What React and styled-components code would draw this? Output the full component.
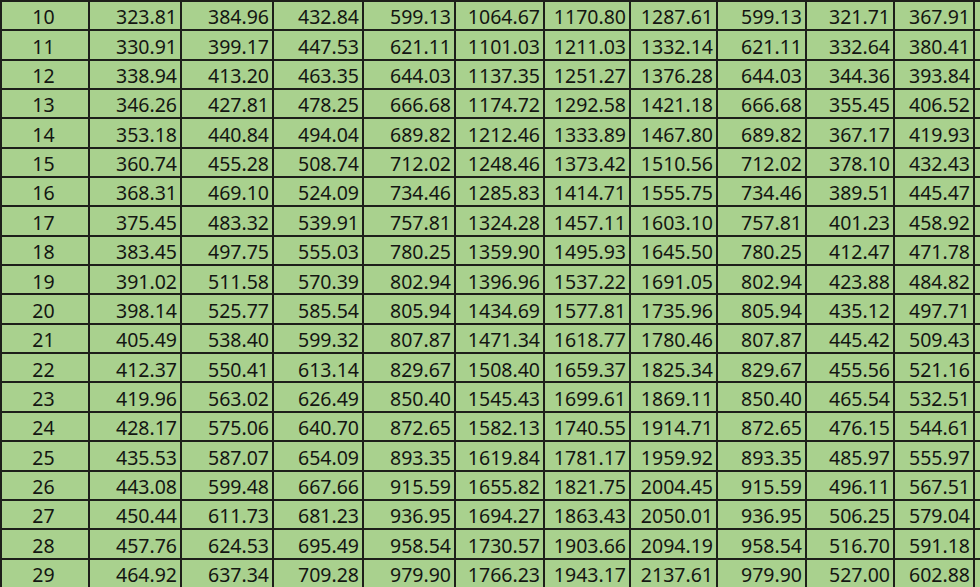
import React from "react";
import styled, { createGlobalStyle } from "styled-components";

const GlobalStyle = createGlobalStyle`
    html, body {
        margin: 0;
        padding: 0;
        background: #ffffff;
        overflow: hidden;
    }
`;

const COLUMN_WIDTHS = [88, 92, 92, 90, 92, 89, 86, 87, 89, 88, 80, 7];

const ROWS = [
    [10, "323.81", "384.96", "432.84", "599.13", "1064.67", "1170.80", "1287.61", "599.13", "321.71", "367.91"],
    [11, "330.91", "399.17", "447.53", "621.11", "1101.03", "1211.03", "1332.14", "621.11", "332.64", "380.41"],
    [12, "338.94", "413.20", "463.35", "644.03", "1137.35", "1251.27", "1376.28", "644.03", "344.36", "393.84"],
    [13, "346.26", "427.81", "478.25", "666.68", "1174.72", "1292.58", "1421.18", "666.68", "355.45", "406.52"],
    [14, "353.18", "440.84", "494.04", "689.82", "1212.46", "1333.89", "1467.80", "689.82", "367.17", "419.93"],
    [15, "360.74", "455.28", "508.74", "712.02", "1248.46", "1373.42", "1510.56", "712.02", "378.10", "432.43"],
    [16, "368.31", "469.10", "524.09", "734.46", "1285.83", "1414.71", "1555.75", "734.46", "389.51", "445.47"],
    [17, "375.45", "483.32", "539.91", "757.81", "1324.28", "1457.11", "1603.10", "757.81", "401.23", "458.92"],
    [18, "383.45", "497.75", "555.03", "780.25", "1359.90", "1495.93", "1645.50", "780.25", "412.47", "471.78"],
    [19, "391.02", "511.58", "570.39", "802.94", "1396.96", "1537.22", "1691.05", "802.94", "423.88", "484.82"],
    [20, "398.14", "525.77", "585.54", "805.94", "1434.69", "1577.81", "1735.96", "805.94", "435.12", "497.71"],
    [21, "405.49", "538.40", "599.32", "807.87", "1471.34", "1618.77", "1780.46", "807.87", "445.42", "509.43"],
    [22, "412.37", "550.41", "613.14", "829.67", "1508.40", "1659.37", "1825.34", "829.67", "455.56", "521.16"],
    [23, "419.96", "563.02", "626.49", "850.40", "1545.43", "1699.61", "1869.11", "850.40", "465.54", "532.51"],
    [24, "428.17", "575.06", "640.70", "872.65", "1582.13", "1740.55", "1914.71", "872.65", "476.15", "544.61"],
    [25, "435.53", "587.07", "654.09", "893.35", "1619.84", "1781.17", "1959.92", "893.35", "485.97", "555.97"],
    [26, "443.08", "599.48", "667.66", "915.59", "1655.82", "1821.75", "2004.45", "915.59", "496.11", "567.51"],
    [27, "450.44", "611.73", "681.23", "936.95", "1694.27", "1863.43", "2050.01", "936.95", "506.25", "579.04"],
    [28, "457.76", "624.53", "695.49", "958.54", "1730.57", "1903.66", "2094.19", "958.54", "516.70", "591.18"],
    [29, "464.92", "637.34", "709.28", "979.90", "1766.23", "1943.17", "2137.61", "979.90", "527.00", "602.88"],
];

const Sheet = styled.div`
    display: grid;
    grid-template-columns: ${COLUMN_WIDTHS.map((w) => `${w}px`).join(" ")};
    grid-template-rows: repeat(${ROWS.length}, 29.35px);
    width: 980px;
    height: 587px;
    box-sizing: border-box;
    border-left: 2px solid #1d1f1a;
    border-top: 2px solid #1d1f1a;
    background: #a9d18e;
    font-family: "Noto Sans", "Open Sans", sans-serif;
    font-size: 19.5px;
    color: #141612;
`;

const Cell = styled.div`
    display: flex;
    align-items: center;
    justify-content: ${(p) => (p.$center ? "center" : "flex-end")};
    box-sizing: border-box;
    padding: 3px 3px 0 0;
    border-right: ${(p) => (p.$open ? "none" : "2px solid #1d1f1a")};
    border-bottom: 2px solid #1d1f1a;
    background: #a9d18e;
    white-space: nowrap;
    overflow: hidden;
    line-height: 1;
`;

const App = () => {
    return (
        <>
            <GlobalStyle />
            <Sheet>
                {ROWS.map((row) => (
                    <React.Fragment key={row[0]}>
                        <Cell $center>{row[0]}</Cell>
                        {row.slice(1).map((value, i) => (
                            <Cell key={i}>{value}</Cell>
                        ))}
                        <Cell $open />
                    </React.Fragment>
                ))}
            </Sheet>
        </>
    );
};

export default App;
